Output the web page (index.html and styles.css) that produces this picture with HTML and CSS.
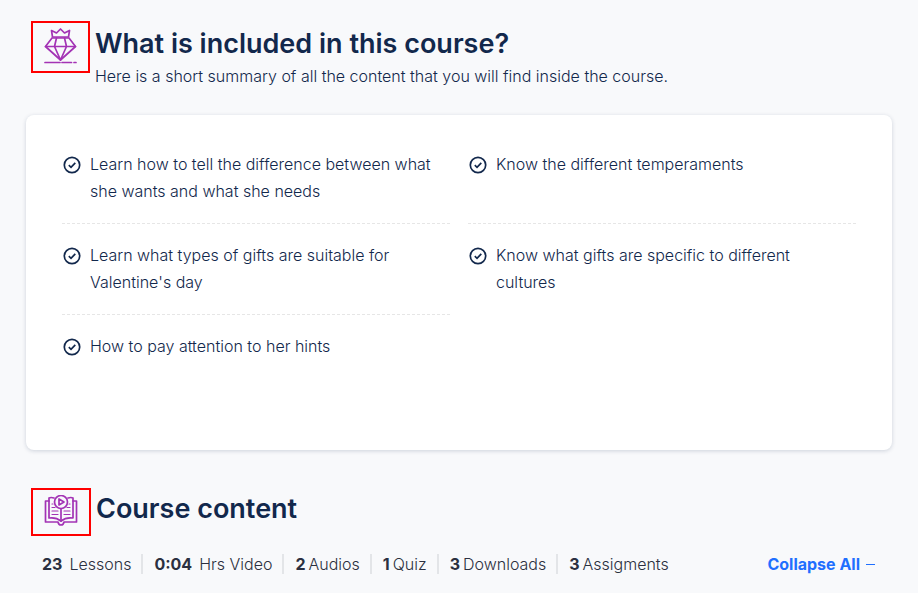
FILE: index.html
```html
<!DOCTYPE html>
<html lang="en">
<head>
  <meta charset="UTF-8">
  <meta name="viewport" content="width=device-width, initial-scale=1">
  <title>Course overview</title>
  <link rel="stylesheet" href="styles.css">
</head>
<body>
  <!-- check mark shared by the list items -->
  <svg class="sprite" aria-hidden="true">
    <symbol id="check" viewBox="0 0 18 18">
      <circle cx="9" cy="9" r="7.7"/>
      <path d="M5.8 9.2 8 11.3 12.3 6.8"/>
    </symbol>
  </svg>

  <main class="page">
    <section class="included">
      <div class="section-header">
        <div class="icon-box">
          <svg class="icon" viewBox="0 0 34 38" aria-hidden="true">
            <path d="M8.500 9 7.500 2.500 12.500 5 16.500 1 20.500 5 25.500 2.500 24.500 9Z"/>
            <path d="M8 10H25L31.500 18.500 16.500 32 1.500 18.500Z"/>
            <path d="M1.500 18.500H31.500M12.500 10 10.500 18.500 16.500 32 22.500 18.500 20.500 10"/>
            <path d="M1 34.500H16M18 34.500H27.500M30 34.500H32"/>
          </svg>
        </div>
        <div class="section-text">
          <h2>What is included in this course?</h2>
          <p>Here is a short summary of all the content that you will find inside the course.</p>
        </div>
      </div>

      <ul class="card">
        <li><svg class="check"><use href="#check"/></svg><span>Learn how to tell the difference between what she wants and what she needs</span></li>
        <li><svg class="check"><use href="#check"/></svg><span>Know the different temperaments</span></li>
        <li><svg class="check"><use href="#check"/></svg><span>Learn what types of gifts are suitable for Valentine's day</span></li>
        <li class="last"><svg class="check"><use href="#check"/></svg><span>Know what gifts are specific to different cultures</span></li>
        <li class="last"><svg class="check"><use href="#check"/></svg><span>How to pay attention to her hints</span></li>
      </ul>
    </section>

    <section class="content">
      <div class="section-header">
        <div class="icon-box icon-box-wide">
          <svg class="icon icon-book" viewBox="0 2 34 34" aria-hidden="true">
            <path d="M10 5Q7 4 5 5V25Q12 24 17 28 22 24 29 25V5Q27 4 24 5"/>
            <path d="M5 8H1.500V29H14Q14.500 32 17 32 19.500 32 20 29H32.500V8H29"/>
            <path d="M17 16V28"/>
            <path class="thin" d="M8 11H9M8 14.500H11M8 18H14M8 21.500H14M25 11H26M23 14.500H26M20 18H26M20 21.500H26"/>
            <circle cx="17" cy="9" r="6.500"/>
            <path d="M15 6V12L20 9Z"/>
          </svg>
        </div>
        <h2>Course content</h2>
      </div>

      <div class="summary">
        <ul class="stats">
          <li class="spaced"><b>23</b> Lessons</li>
          <li class="spaced"><b>0:04</b> Hrs Video</li>
          <li><b>2</b> Audios</li>
          <li><b>1</b> Quiz</li>
          <li><b>3</b> Downloads</li>
          <li><b>3</b> Assigments</li>
        </ul>
        <button type="button" class="collapse">Collapse All <span class="minus"></span></button>
      </div>
    </section>
  </main>
</body>
</html>
```

FILE: styles.css
```css
* {
  box-sizing: border-box;
}
body {
  margin: 0;
  background: #f8f9fb;
  color: #12284c;
  font-family: Inter, sans-serif;
  font-size: 16px;
  font-weight: 300;
}
h2, p, ul {
  margin: 0;
  padding: 0;
}
ul {
  list-style: none;
}
svg {
  fill: none;
  flex-shrink: 0;
}
.sprite {
  display: none;
}
.page {
  padding: 21px 26px 0;
}

/* headings */
.section-header {
  display: flex;
  gap: 5px;
  padding-left: 5px;
}
.section-text {
  padding-top: 2px;
}
.section-header h2 {
  font-size: 27px;
  font-weight: 600;
  line-height: 42px;
}
.section-header p {
  line-height: 22px;
}
.icon-box {
  display: flex;
  align-items: center;
  justify-content: center;
  width: 59px;
  height: 52px;
  border: 2px solid #f00;
}
.icon-box-wide {
  width: 60px;
  height: 48px;
}
.icon {
  width: 34px;
  height: 38px;
  stroke: #a333b5;
  stroke-width: 1.7;
  stroke-linecap: round;
  stroke-linejoin: round;
}
.icon-book {
  height: 34px;
}
.thin {
  stroke-width: 1.2;
}

/* list of course benefits */
.card {
  display: grid;
  grid-template-columns: 1fr 1fr;
  column-gap: 18px;
  margin-top: 28px;
  padding: 18px 36px 72px;
  background: #fff;
  border-radius: 8px;
  box-shadow: 0 1px 4px rgba(18, 40, 76, 0.18);
}
.card li {
  display: flex;
  gap: 9px;
  padding: 18px 12px 18px 1px;
  border-bottom: 1px dashed #e6e6e6;
  line-height: 27px;
}
.card .last {
  border-bottom: 0;
}
.check {
  width: 18px;
  height: 18px;
  margin-top: 5px;
  stroke: #12284c;
  stroke-width: 1.7;
}

/* course totals */
.content {
  margin-top: 38px;
}
.summary {
  display: flex;
  justify-content: space-between;
  align-items: center;
  margin-top: 18px;
  padding: 0 17px 0 16px;
  color: #2b3040;
}
.stats {
  display: flex;
}
.stats li {
  display: flex;
  gap: 3px;
  padding: 0 10px 0 11px;
  border-right: 2px solid #e3e5e8;
  line-height: 20px;
}
.stats .spaced {
  gap: 7px;
}
.stats li:first-child {
  padding-left: 0;
}
.stats li:last-child {
  border-right: 0;
}
.stats b {
  font-weight: 700;
}
.collapse {
  display: flex;
  align-items: center;
  gap: 6px;
  padding: 0;
  border: 0;
  background: none;
  color: #1f6fff;
  font: inherit;
  font-weight: 700;
  cursor: pointer;
}
.minus {
  width: 9px;
  height: 1px;
  background: #1f6fff;
}
```
